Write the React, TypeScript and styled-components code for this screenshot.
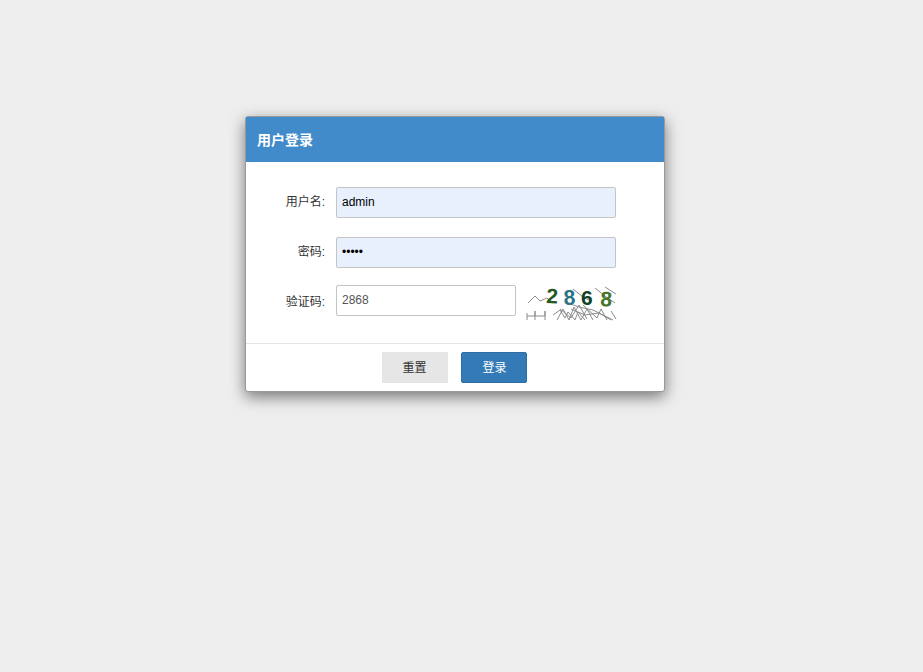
import React from "react";
import styled, { createGlobalStyle } from "styled-components";

const GlobalStyle = createGlobalStyle`
  html, body {
    margin: 0;
    padding: 0;
    height: 100%;
    background-color: #eeeeee;
  }
  body {
    font-family: "Liberation Sans", Arial, "Noto Sans CJK SC", sans-serif;
    font-size: 12px;
    color: #333;
  }
`;

const Page = styled.div`
  width: 923px;
  height: 672px;
  padding: 116px 0 0 245px;
  box-sizing: border-box;
  overflow: hidden;
`;

const Dialog = styled.div`
  width: 420px;
  box-sizing: border-box;
  background-color: #fff;
  border: 1px solid #999;
  border-radius: 3px;
  box-shadow: 0 5px 15px rgba(0, 0, 0, 0.5);
`;

const Header = styled.div`
  height: 45px;
  padding: 0 11px 2px;
  box-sizing: border-box;
  display: flex;
  align-items: center;
  background-color: #428bca;
  color: #fff;
  font-size: 14px;
  font-weight: bold;
`;

const Body = styled.div`
  padding: 25px 48px 23px 0;
  display: flex;
  flex-direction: column;
`;

const Row = styled.div<{ $gap: number }>`
  display: flex;
  align-items: flex-start;
  margin-bottom: ${(p) => p.$gap}px;
`;

const Label = styled.label<{ $drop: number }>`
  width: 79px;
  margin-right: 11px;
  height: 31px;
  line-height: 29px;
  padding-top: ${(p) => p.$drop}px;
  box-sizing: border-box;
  text-align: right;
  font-size: 12px;
  color: #333;
`;

const Input = styled.input<{ $filled?: boolean; $short?: boolean }>`
  width: ${(p) => (p.$short ? 180 : 280)}px;
  height: 31px;
  box-sizing: border-box;
  padding: 0 5px 2px;
  border: 1px solid #c4c4c4;
  border-radius: 2px;
  outline: none;
  font-family: inherit;
  font-size: 12px;
  color: ${(p) => (p.$filled ? "#000" : "#555")};
  background-color: ${(p) => (p.$filled ? "#e8f0fe" : "#fff")};
`;

const Captcha = styled.svg`
  display: block;
  margin-left: 11px;
  flex: none;
  overflow: visible;
`;

const Footer = styled.div`
  height: 48px;
  border-top: 1px solid #e5e5e5;
  display: flex;
  justify-content: center;
  align-items: flex-start;
  gap: 13px;
  padding: 8px 2px 0 0;
  box-sizing: border-box;
`;

const Button = styled.button<{ $primary?: boolean }>`
  width: 66px;
  height: 31px;
  padding: ${(p) => (p.$primary ? "0 0 2px 2px" : "0 0 2px")};
  font-family: inherit;
  font-size: 12px;
  border-radius: ${(p) => (p.$primary ? 2 : 0)}px;
  border: 1px solid ${(p) => (p.$primary ? "#2e6da4" : "#e6e6e6")};
  background-color: ${(p) => (p.$primary ? "#337ab7" : "#e6e6e6")};
  color: ${(p) => (p.$primary ? "#fff" : "#333")};
`;

const digits = [
  { ch: "2", x: 19, y: 18, fill: "#2a5a23", rotate: 3 },
  { ch: "8", x: 37, y: 20, fill: "#2b7385", rotate: -3 },
  { ch: "6", x: 54, y: 20, fill: "#123f25", rotate: 0 },
  { ch: "8", x: 73, y: 21, fill: "#44752a", rotate: 3 },
];

// captcha noise, traced from the picture
const noise = [
  "1,18 8,11 13,16 20,13 26,18",
  "0,28 0,35",
  "0,31 8,31 8,26 8,35",
  "8,31 18,31 18,26 18,35",
  "26,30 33,25 38,33 41,27 48,35 51,27 58,35",
  "30,35 36,24 42,35 47,22 54,35 60,24 66,35",
  "38,17 52,22 66,25 78,31 86,35",
  "33,24 44,33 52,20 60,34",
  "56,20 70,33 74,24 80,35",
  "44,24 58,30 72,28 84,35",
  "68,3 78,11 88,18",
  "78,2 89,9",
  "46,4 56,12 64,16",
  "84,26 89,34",
];

const CaptchaImage = () => (
  <Captcha width="89" height="35" viewBox="0 0 89 35">
    {noise.map((pts, i) => (
      <polyline
        key={i}
        points={pts}
        fill="none"
        stroke="#8c8c8c"
        strokeWidth="1"
      />
    ))}
    {digits.map((d, i) => (
      <text
        key={i}
        x={d.x}
        y={d.y}
        fill={d.fill}
        fontSize="21"
        fontWeight="bold"
        fontFamily='"Liberation Sans", sans-serif'
        transform={`rotate(${d.rotate} ${d.x} ${d.y})`}
      >
        {d.ch}
      </text>
    ))}
  </Captcha>
);

const App: () => JSX.Element = () => {
  return (
    <Page>
      <GlobalStyle />
      <Dialog>
        <Header>用户登录</Header>
        <Body>
          <Row $gap={19}>
            <Label $drop={1}>用户名:</Label>
            <Input $filled defaultValue="admin" />
          </Row>
          <Row $gap={17}>
            <Label $drop={1}>密码:</Label>
            <Input $filled type="password" defaultValue="admin" />
          </Row>
          <Row $gap={0}>
            <Label $drop={3}>验证码:</Label>
            <Input $short defaultValue="2868" />
            <CaptchaImage />
          </Row>
        </Body>
        <Footer>
          <Button>重置</Button>
          <Button $primary>登录</Button>
        </Footer>
      </Dialog>
    </Page>
  );
};

export default App;
